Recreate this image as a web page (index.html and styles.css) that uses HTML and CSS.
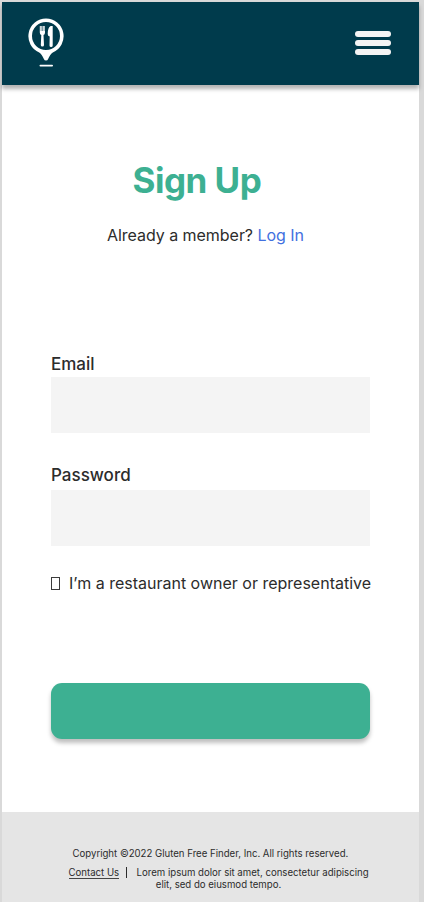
FILE: index.html
```html
<!DOCTYPE html>
<html lang="en">
<head>
<meta charset="utf-8">
<title>Sign Up</title>
<link rel="stylesheet" href="styles.css">
</head>
<body>
<div class="page">
  <header class="header">
    <svg class="logo" width="38" height="52" viewBox="0 0 38 52" fill="#fff">
      <path fill-rule="evenodd" d="M19 1.500A17.700 17.700 0 0 0 12.200 35.500Q14.800 37 17 42.300Q17.400 43.500 19 43.500Q20.600 43.500 21 42.300Q23.200 37 25.800 35.500A17.700 17.700 0 0 0 19 1.500ZM19 5A14 14 0 1 1 19 33A14 14 0 1 1 19 5Z"/>
      <path d="M12.800 9h1v5h.5v-5h1v5h.5v-5h1v5h.5v-5h.7v6.500q0 2-1.500 2.500l.5 10q0 1.500-1.600 1.500t-1.600-1.500l.5-10q-1.500-.5-1.500-2.500z"/>
      <path d="M25.700 9v19.500q0 1.500-1.600 1.500t-1.600-1.500l.2-9q-2-.5-2-2.500q0-6.500 3-8z"/>
      <rect x="12.500" y="47.700" width="13.500" height="1.800" rx=".9"/>
    </svg>
    <div class="menu"><span></span><span></span><span></span></div>
  </header>
  <main class="main">
    <h1>Sign Up</h1>
    <p class="member">Already a member? <a>Log In</a></p>
    <label class="label email">Email</label>
    <div class="field"></div>
    <label class="label password">Password</label>
    <div class="field"></div>
    <div class="owner"><span class="box"></span><span>I’m a restaurant owner or representative</span></div>
    <div class="button"></div>
  </main>
  <footer class="footer">
    <p class="copy">Copyright ©2022 Gluten Free Finder, Inc. All rights reserved.</p>
    <p class="legal"><a>Contact Us</a><span class="bar"></span>Lorem ipsum dolor sit amet, consectetur adipiscing<br>elit, sed do eiusmod tempo.</p>
  </footer>
</div>
</body>
</html>
```
FILE: styles.css
```css
* { box-sizing: border-box; margin: 0; padding: 0; }
body { background: #d9d9d9; padding: 2px 5px 0 2px; font-family: Inter, sans-serif; color: #2c2c2c; height: 902px; overflow: hidden; }
.page { width: 417px; height: 900px; background: #fff; display: flex; flex-direction: column; }
.header { height: 82.500px; background: #003b4c; box-shadow: 0 4px 4px rgba(0,0,0,.3); display: flex; justify-content: space-between; padding: 15px 28px 0 25px; }
.menu { width: 36px; padding-top: 14px; display: flex; flex-direction: column; gap: 3px; }
.menu span { height: 6px; border-radius: 3px; background: #f4f4f4; }
.main { flex: 1; padding: 0 49px; }
h1 { margin-top: 73px; height: 44px; line-height: 44px; padding-left: 81.500px; font-size: 35px; letter-spacing: -.5px; font-weight: 700; color: #3db092; white-space: nowrap; }
.member { margin-top: 22px; padding-left: 56px; height: 22px; line-height: 22px; font-size: 16px; letter-spacing: -.04px; white-space: nowrap; }
.member a { color: #4270e0; }
.label { display: block; font-size: 17px; font-weight: 500; height: 24px; line-height: 24px; }
.email { margin-top: 106px; margin-bottom: 1.500px; }
.password { margin-top: 30px; margin-bottom: 3px; }
.field { width: 319px; height: 56px; background: #f4f4f4; }
.owner { margin-top: 26px; height: 22px; line-height: 22px; font-size: 16px; display: flex; align-items: center; white-space: nowrap; }
.box { flex: none; width: 9px; height: 13px; border: 1px solid #3c3c3c; margin-right: 9px; }
.button { width: 319px; height: 56px; margin-top: 89px; border-radius: 11px; background: #3db092; box-shadow: 0 4px 4px rgba(0,0,0,.25); }
.footer { height: 90px; background: #e5e5e5; font-size: 9.620px; line-height: 12px; white-space: nowrap; padding-top: 35.500px; }
.copy { padding-left: 70.500px; }
.legal { width: 300px; margin: 7px 0 0 66.500px; text-align: center; }
.legal a { border-bottom: 1px solid #444; }
.bar { display: inline-block; vertical-align: -2px; width: 1px; height: 11px; background: #2c2c2c; margin: 0 9.500px 0 7px; }
```
